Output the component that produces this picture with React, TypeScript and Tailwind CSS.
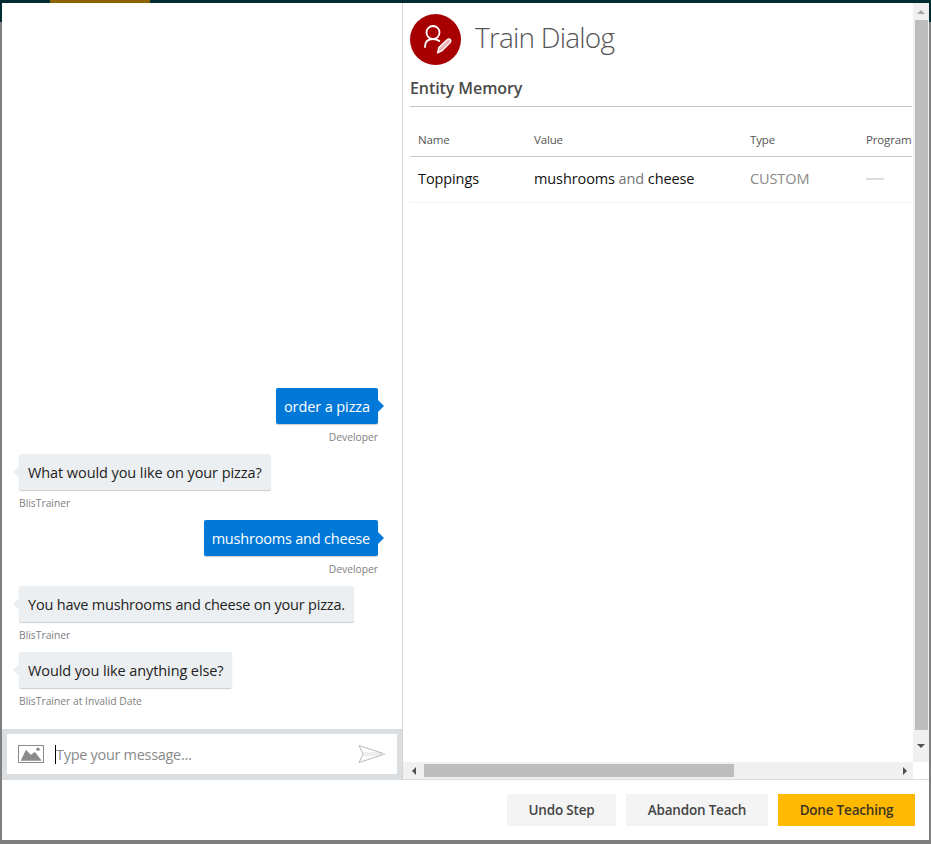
import React from 'react';

type MsgProps = { text: string; label: string; track?: string };

const UserBubble = ({ text, label, track = 'tracking-[-0.2px]' }: MsgProps) => (
  <div className="flex flex-col items-end mb-[4px]">
    <div className={`relative h-[36px] flex items-center px-[8px] pt-[1px] bg-[#0078d7] text-white text-[14.500px] rounded-[2px] shadow-[0_1px_1px_rgba(0,0,0,0.2)] ${track}`}>
      {text}
      <span className="absolute right-[-6px] top-[12px] w-0 h-0 border-y-[6px] border-y-transparent border-l-[6px] border-l-[#0078d7]" />
    </div>
    <div className="h-[26px] pt-[6px] text-[10.300px] leading-[15px] text-[#808080]">{label}</div>
  </div>
);

const BotBubble = ({ text, label, track = 'tracking-[-0.2px]' }: MsgProps) => (
  <div className="flex flex-col items-start mb-[4px]">
    <div className={`relative h-[36px] flex items-center pl-[9px] pr-[9px] pt-[1px] bg-[#eceff1] text-[#222] text-[14.500px] rounded-[2px] shadow-[0_1px_1px_rgba(0,0,0,0.2)] ${track}`}>
      {text}
      <span className="absolute left-[-6px] top-[12px] w-0 h-0 border-y-[6px] border-y-transparent border-r-[6px] border-r-[#eceff1]" />
    </div>
    <div className="h-[26px] pt-[6px] text-[10.300px] leading-[15px] text-[#808080]">{label}</div>
  </div>
);

const Arrow = ({ dir }: { dir: 'up' | 'down' | 'left' | 'right' }) => {
  const points = {
    up: '0,4 4,0 8,4',
    down: '0,0 8,0 4,4',
    left: '4,0 4,8 0,4',
    right: '0,0 4,4 0,8',
  }[dir];
  const size = dir === 'up' || dir === 'down' ? 'w-[8px] h-[4px]' : 'w-[4px] h-[8px]';
  const vb = dir === 'up' || dir === 'down' ? '0 0 8 4' : '0 0 4 8';
  return (
    <svg viewBox={vb} className={size}>
      <polygon points={points} fill={dir === 'up' ? '#a6a6a6' : '#505050'} />
    </svg>
  );
};

export default function App() {
  return (
    <div className="w-[931px] h-[844px] flex flex-col bg-[#7f7f7f] overflow-hidden font-['Open_Sans',sans-serif]">
      {/* top strip of the page behind the dialog */}
      <div className="h-[3px] flex bg-[#002b30] shrink-0">
        <div className="ml-[50px] w-[100px] bg-[#8b6400]" />
      </div>

      <div className="flex flex-1 min-h-0">
        <div className="w-[2px] flex flex-col shrink-0">
          <div className="h-[19px] bg-[#002b30]" />
        </div>

        <div className="flex-1 flex flex-col bg-white min-w-0">
          <div className="h-[777px] flex shrink-0">
            {/* chat pane */}
            <div className="w-[401px] flex flex-col border-r border-[#d4d4d4] shrink-0">
              <div className="flex-1 flex flex-col justify-end pl-[17px] pr-[24px] pb-[11px]">
                <UserBubble text="order a pizza" label="Developer" track="tracking-[-0.1px]" />
                <BotBubble text="What would you like on your pizza?" label="BlisTrainer" track="tracking-[-0.08px]" />
                <UserBubble text="mushrooms and cheese" label="Developer" />
                <BotBubble text="You have mushrooms and cheese on your pizza." label="BlisTrainer" />
                <BotBubble text="Would you like anything else?" label="BlisTrainer at Invalid Date" track="tracking-[-0.1px]" />
              </div>
              <div className="h-[51px] shrink-0 bg-[#dbdee1] pl-[5px] pr-[5px] pt-[5px] pb-[6px]">
                <div className="h-[40px] bg-white flex items-center pl-[11px] pr-[11px]">
                  <svg viewBox="0 0 26 18" className="w-[26px] h-[18px] shrink-0">
                    <rect x="0.5" y="0.5" width="25" height="17" fill="none" stroke="#8a8a8a" />
                    <polygon points="2.700,15.700 8,4.700 12.700,9.700 17,7 23.700,15.700" fill="#8a8a8a" />
                    <circle cx="20" cy="4.300" r="1.700" fill="#8a8a8a" />
                  </svg>
                  <div className="ml-[11px] w-px h-[19px] bg-black shrink-0" />
                  <div className="flex-1 pt-[2px] text-[14.500px] text-[#8a8a8a] tracking-[-0.3px]">Type your message...</div>
                  <svg viewBox="0 0 28 18" className="w-[28px] h-[18px] shrink-0">
                    <polygon points="1,0.500 27,9 1,17.500 5,9" fill="none" stroke="#b8b8b8" />
                    <polyline points="5,8 20,8 27,9 20,10 5,10" fill="none" stroke="#dcdcdc" />
                  </svg>
                </div>
              </div>
            </div>

            {/* teaching pane with its scrollbars */}
            <div className="flex-1 flex flex-col min-w-0 border-b border-[#dcdcdc]">
              <div className="flex-1 flex min-h-0">
                <div className="flex-1 min-w-0 overflow-hidden pl-[7px] pr-px">
                  <div className="flex items-center h-[70px] pt-[2px]">
                    <svg viewBox="0 0 51 51" className="w-[51px] h-[51px] shrink-0" fill="none">
                      <circle cx="25.500" cy="25.500" r="25.500" fill="#a80000" />
                      <circle cx="23" cy="18.500" r="6.500" stroke="white" strokeWidth="1.800" />
                      <path d="M15 33c0-5.500 3.500-8 8-8 2.500 0 4.500.6 6.300 2" stroke="white" strokeWidth="1.800" strokeLinecap="round" />
                      <path d="M27.500 39l1.300-5.500 8.500-8c.9-.9 2.300-.9 3.100 0 .8.900.7 2.200-.1 3.100l-8 8z" stroke="white" strokeWidth="1.200" strokeLinejoin="round" fill="#e9b8b8" />
                    </svg>
                    <div className="ml-[14px] mb-[4px] text-[28px] font-light text-[#555] tracking-[-0.8px]">Train Dialog</div>
                  </div>
                  <div className="h-[34px] border-b border-[#c4c4c4] text-[16px] font-semibold text-[#4a4a4a] leading-[31px] tracking-[-0.08px]">Entity Memory</div>
                  <div className="mt-[17px] h-[33px] flex items-center border-b border-[#c8c8c8] pl-[8px] text-[11.500px] text-[#555] tracking-[-0.15px]">
                    <div className="w-[116px] shrink-0">Name</div>
                    <div className="w-[216px] shrink-0">Value</div>
                    <div className="w-[116px] shrink-0">Type</div>
                    <div className="shrink-0">Program</div>
                  </div>
                  <div className="h-[46px] flex items-center border-b border-[#f2f2f2] pl-[8px] pb-[1px] text-[14.500px] tracking-[-0.1px]">
                    <div className="w-[116px] shrink-0 text-[#111] font-medium">Toppings</div>
                    <div className="w-[216px] shrink-0 text-[#767676]">
                      <span className="text-[#111] font-medium">mushrooms</span> and <span className="text-[#111] font-medium">cheese</span>
                    </div>
                    <div className="w-[116px] shrink-0 text-[#8a8a8a]">CUSTOM</div>
                    <div className="w-[18px] h-[2px] bg-[#dcdcdc] shrink-0" />
                  </div>
                </div>

                {/* vertical scrollbar */}
                <div className="w-[16px] shrink-0 bg-[#f0f0f0] flex flex-col">
                  <div className="h-[17px] flex items-center justify-center shrink-0"><Arrow dir="up" /></div>
                  <div className="h-[710px] ml-[2px] mr-[1px] bg-[#bdbdbd] shrink-0" />
                  <div className="flex-1 flex items-center justify-center"><Arrow dir="down" /></div>
                </div>
              </div>

              {/* horizontal scrollbar */}
              <div className="h-[17px] shrink-0 flex">
                <div className="flex-1 bg-[#f0f0f0] flex items-center">
                  <div className="w-[21px] flex justify-center shrink-0"><Arrow dir="left" /></div>
                  <div className="w-[310px] h-[13px] bg-[#bdbdbd] shrink-0" />
                  <div className="flex-1 flex justify-end pr-[6px]"><Arrow dir="right" /></div>
                </div>
                <div className="w-[16px] bg-white shrink-0" />
              </div>
            </div>
          </div>

          <div className="flex-1 flex items-start justify-end gap-[10px] pt-[14px] pr-[14px] text-[13.500px] font-semibold tracking-[-0.2px]">
            <button className="w-[109px] h-[32px] bg-[#f4f4f4] text-[#444]">Undo Step</button>
            <button className="w-[142px] h-[32px] bg-[#f4f4f4] text-[#444]">Abandon Teach</button>
            <button className="w-[137px] h-[32px] bg-[#ffb900] text-[#3d3520]">Done Teaching</button>
          </div>
        </div>

        <div className="w-[2px] flex flex-col shrink-0">
          <div className="h-[19px] bg-[#002b30]" />
        </div>
      </div>

      <div className="h-[4px] shrink-0" />
    </div>
  );
}
